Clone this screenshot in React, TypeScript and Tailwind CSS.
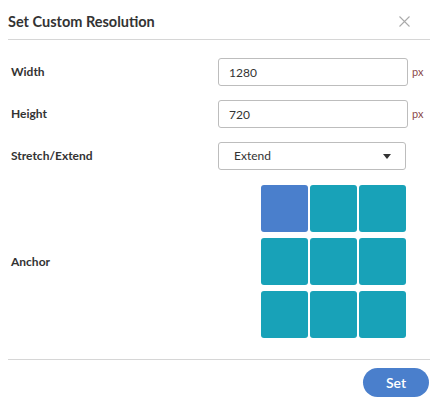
import { useState } from 'react';

const cells = [0, 1, 2, 3, 4, 5, 6, 7, 8];

export default function App() {
  const [anchor, setAnchor] = useState(0);
  const [width, setWidth] = useState('1280');
  const [height, setHeight] = useState('720');

  return (
    <div className="w-[441px] h-[403px] bg-white text-[#333]" style={{ fontFamily: 'Lato, "Open Sans", sans-serif' }}>
      <header className="flex items-center justify-between h-[39px] px-2 pt-1">
        <h1 className="text-[14.5px] font-bold text-[#333]">Set Custom Resolution</h1>
        <button className="mr-[23px] text-[#aaa]" title="Close">
          <svg width="11" height="11" viewBox="0 0 11 11" stroke="currentColor" strokeWidth="1.1">
            <path d="M0.5 0.5 L10.5 10.5 M10.5 0.5 L0.5 10.5" />
          </svg>
        </button>
      </header>
      <div className="mx-2 w-[422px] border-t border-[#d6d6d6]" />

      <div className="pl-[11px] pt-[18px]">
        <div className="flex items-center h-[28px]">
          <label className="w-[207px] text-[12px] font-bold text-[#333]">Width</label>
          <input
            value={width}
            onChange={(e) => setWidth(e.target.value)}
            className="w-[190px] h-[28px] border border-[#bdbdbd] rounded-[3px] px-[10px] text-[12px] text-[#333] outline-none"
          />
          <span className="ml-[4px] text-[11px] text-[#8b4a4a]">px</span>
        </div>
        <div className="flex items-center h-[28px] mt-[14px]">
          <label className="w-[207px] text-[12px] font-bold text-[#333]">Height</label>
          <input
            value={height}
            onChange={(e) => setHeight(e.target.value)}
            className="w-[190px] h-[28px] border border-[#bdbdbd] rounded-[3px] px-[10px] text-[12px] text-[#333] outline-none"
          />
          <span className="ml-[4px] text-[11px] text-[#8b4a4a]">px</span>
        </div>
        <div className="flex items-center h-[28px] mt-[14px]">
          <label className="w-[207px] text-[12px] font-bold text-[#333]">Stretch/Extend</label>
          <div className="w-[188px] h-[28px] border border-[#bdbdbd] rounded-[3px] flex items-center justify-between pl-[15px] pr-[14px] text-[12px] text-[#333]">
            <span>Extend</span>
            <svg width="8" height="5" viewBox="0 0 8 5"><path d="M0 0 H8 L4 5 Z" fill="#333" /></svg>
          </div>
        </div>

        <div className="flex items-center mt-[15px]">
          <label className="w-[250px] text-[12px] font-bold text-[#333]">Anchor</label>
          <div className="grid grid-cols-[47px_47px_47px] gap-x-[2px] gap-y-[6px]">
            {cells.map((i) => (
              <button
                key={i}
                onClick={() => setAnchor(i)}
                className={
                  'w-[47px] h-[47px] rounded-[3px] ' + (anchor === i ? 'bg-[#4a7fcc]' : 'bg-[#18a2b8]')
                }
              />
            ))}
          </div>
        </div>
      </div>

      <div className="mx-2 mt-[21px] w-[422px] border-t border-[#d6d6d6]" />
      <div className="flex justify-end pr-[12px] pt-[8px]">
        <button className="w-[66px] h-[29px] rounded-full bg-[#4a7fcc] text-white text-[14px] font-semibold">Set</button>
      </div>
    </div>
  );
}
